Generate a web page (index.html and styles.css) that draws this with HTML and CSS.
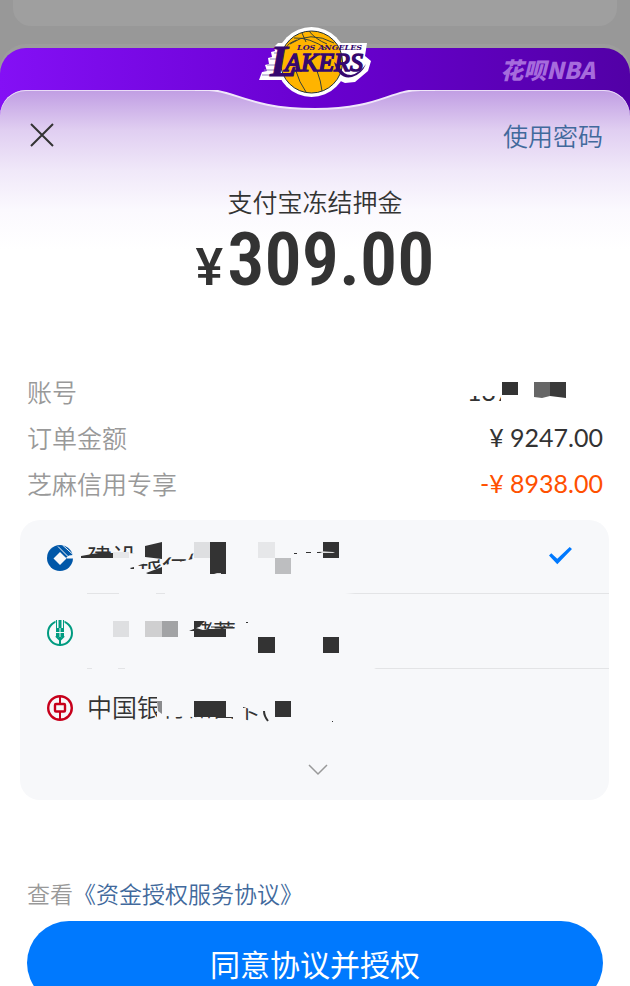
FILE: index.html
```html
<!DOCTYPE html>
<html lang="zh-CN">
<head>
<meta charset="utf-8">
<meta name="viewport" content="width=device-width, initial-scale=1">
<title>支付宝冻结押金</title>
<link rel="stylesheet" href="styles.css">
</head>
<body>
<div class="backdrop-card"></div>
<main class="sheet">
  <header class="banner">
    <svg class="logo" width="130" height="95" viewBox="0 0 130 95" role="img" aria-label="Los Angeles Lakers">
      <circle cx="61.500" cy="42" r="35" fill="#fff"/>
      <path d="M28 23H117L115 36L121 41L118 51L105 62L95 63L86 59L37 60H9L12 52L17 51L15 45L19 44L18 38L22 37L21 32L25 31L24 27Z" fill="#fff"/>
      <circle cx="61.500" cy="42" r="31" fill="#ffb400" stroke="#22303a" stroke-width="1"/>
      <g fill="none" stroke="#384236" stroke-width="1">
        <path d="M40 24Q60 10 84 23M44 18Q59 17 77 29M52 13L56 22M59 11Q65 19 77 24M46 51Q49 62 56 72M67 51Q71 61 72 71M36 28Q38 23 47 20"/>
      </g>
      <g font-family="Liberation Serif, serif" font-style="italic" fill="#35086f">
        <path d="M27 45H17M26 50H14M24 55H12M28 39H20M30 33H24" stroke="#9384bd" stroke-width="1"/>
        <text x="47" y="30" font-family="DejaVu Serif, serif" font-size="8" font-weight="700">LOS ANGELES</text>
        <text x="20" y="56" font-size="44" font-weight="700" stroke="#35086f" stroke-width="1">L</text>
        <text x="35" y="51" font-size="26" stroke="#35086f" stroke-width="1.500">AKERS</text>
      </g>
      <path d="M84 42Q89 60 102 57Q112 54 116 44Q110 53 101 55Q93 55 89 46Z" fill="#35086f"/>
    </svg>
    <span class="wordmark">花呗NBA</span>
  </header>
  <div class="panel">
    <svg class="dip" width="240" height="22" viewBox="0 0 240 22" aria-hidden="true">
      <defs><linearGradient id="dipFill"><stop offset="0" stop-color="#7307de"/><stop offset=".5" stop-color="#6900d0"/><stop offset="1" stop-color="#6200c1"/></linearGradient></defs>
      <path d="M0 0H14C38 0 56 19 120 19S194 0 226 0H240Z" fill="url(#dipFill)"/>
      <path d="M0 0H14C38 0 56 19 120 19S194 0 226 0H240" fill="none" stroke="#f0e6fa" stroke-width="2"/>
    </svg>
    <div class="toolbar">
      <button class="close" type="button" aria-label="关闭">
        <svg width="24" height="24" viewBox="0 0 24 24"><path d="M1 1L23 23M23 1L1 23" fill="none" stroke="#333" stroke-width="2"/></svg>
      </button>
      <a class="link" href="#">使用密码</a>
    </div>
    <h1 class="title">支付宝冻结押金</h1>
    <p class="amount"><span class="currency">¥</span>309.00</p>

    <dl class="details">
      <div class="detail">
        <dt>账号</dt>
        <dd>
          <svg class="fragment" width="134" height="46" viewBox="468 368 134 46" aria-hidden="true">
            <clipPath id="accountClip"><path d="M468 396H500V403H468Z"/></clipPath>
            <text x="466" y="401" font-family="Lato, sans-serif" font-size="25" fill="#333" clip-path="url(#accountClip)">137</text>
            <path d="M501 382H517V395H501Z" fill="#333"/>
            <path d="M533 382H549V396L541 398L533 397Z" fill="#666"/>
            <path d="M549 382H565V398L549 396Z" fill="#3a3a3a"/>
          </svg>
        </dd>
      </div>
      <div class="detail"><dt>订单金额</dt><dd>¥ 9247.00</dd></div>
      <div class="detail discount"><dt>芝麻信用专享</dt><dd>-¥ 8938.00</dd></div>
    </dl>

    <div class="banks" role="radiogroup">
      <label class="bank bank-first">
        <svg class="bank-icon" width="26" height="26" viewBox="0 0 26 26" aria-hidden="true">
          <circle cx="13" cy="13" r="13" fill="#0057a8"/>
          <path d="M13 7L19.500 13.500L13 20L6.500 13.500Z" fill="#f7f8fa"/>
          <path d="M17 11L20 13.500H26V10L22 10.500L19 13Z" fill="#f7f8fa"/>
          <path d="M11 1.500L21.500 12M15.500 0L26 9.500" stroke="#f7f8fa" stroke-width="1"/>
        </svg>
        <svg class="fragment" width="280" height="74" viewBox="80 520 280 74" aria-hidden="true">
          <clipPath id="clipA"><path d="M80 544H135V552L108 554L80 557Z"/></clipPath>
          <clipPath id="clipB"><path d="M136 565L160 558L202 551V556L165 564L160 568L140 568Z"/></clipPath>
          <g font-family="Noto Sans CJK SC, sans-serif" font-size="25" font-weight="400" fill="#333">
            <text x="87" y="566" clip-path="url(#clipA)">建设</text>
            <text x="137" y="571" clip-path="url(#clipB)">银行储</text>
          </g>
          <path d="M81 555L98 552H113V557H81ZM145 545L162 541V558L145 556ZM146 572L162 566V573H148ZM130 567L134 566V568L131 568ZM210 541H226V573H210ZM323 541H339V557H323ZM294 552H297V553H294ZM306 551H311V552H306ZM317 551H323V552H317Z" fill="#333"/>
          <path d="M113 551H129V557H113ZM258 541H275V557H258Z" fill="#e6e7e9"/>
          <path d="M194 541H210V557H194Z" fill="#dedfe1"/>
          <path d="M275 557H291V573H275Z" fill="#bdbec0"/>
          <path d="M318 550L333 551L335 552L322 552ZM214 573L217 572H221V573Z" fill="#ddd"/>
        </svg>
        <input class="pick" type="radio" name="bank" aria-label="建设银行" checked>
      </label>
      <label class="bank bank-second">
        <svg class="bank-icon" width="26" height="26" viewBox="0 0 26 26" fill="none" stroke="#009b80" aria-hidden="true">
          <circle cx="13" cy="13" r="12" stroke-width="2"/>
          <path d="M8.500 0H17.500V8H8.500Z" fill="#f7f8fa" stroke="none"/>
          <path d="M9.500 0V9M16.500 0V9" stroke-width="1"/>
          <path d="M13 0V8" stroke-width="3"/>
          <path d="M9 8H17V17H9Z" fill="#009b80" stroke="none"/>
          <path d="M9 16L13 20L17 16M13 16V26" stroke-width="2"/>
          <path d="M9 12.500H17M13 8V17" stroke="#f7f8fa" stroke-width="1"/>
        </svg>
        <svg class="fragment" width="280" height="74" viewBox="80 595 280 74" aria-hidden="true">
          <clipPath id="clipC"><path d="M194 620H236V628H194Z"/></clipPath>
          <path d="M113 620H129V636H113Z" fill="#dedfe1"/>
          <path d="M145 620H162V636H145Z" fill="#cfcfd0"/>
          <path d="M162 620H178V636H162Z" fill="#a2a3a5"/>
          <path d="M194 620H205L199 626L194 628ZM189 630L196 627L203 629L208 628H226V636H194V630ZM246 621H248V622H246ZM258 636H275V652H258ZM323 636H339V652H323Z" fill="#333"/>
          <text x="190" y="640" font-family="Noto Sans CJK SC, sans-serif" font-size="23" font-weight="400" fill="#333" clip-path="url(#clipC)">储蓄</text>
          <path d="M211 626H233" stroke="#333" stroke-width="1"/>
        </svg>
        <input class="pick" type="radio" name="bank" aria-label="农业银行">
      </label>
      <label class="bank">
        <svg class="bank-icon" width="26" height="26" viewBox="0 0 26 26" fill="none" stroke="#c7001b" aria-hidden="true">
          <circle cx="13" cy="13" r="11.800" stroke-width="2.400"/>
          <rect x="8" y="9" width="10" height="7.500" rx="1" stroke-width="2.400"/>
          <path d="M13 1V8M13 17V25" stroke-width="2"/>
        </svg>
        <svg class="fragment" width="280" height="74" viewBox="80 670 280 74" role="img" aria-label="中国银行">
          <clipPath id="clipD"><path d="M80 690H157V720H80Z"/></clipPath>
          <clipPath id="clipE"><path d="M163 715L194 716H233V718H163Z"/></clipPath>
          <clipPath id="clipF"><path d="M243 706L260 711V722H258L243 718Z"/></clipPath>
          <g font-family="Noto Sans CJK SC, sans-serif" font-size="25" fill="#333">
            <text x="87" y="716" font-weight="350" clip-path="url(#clipD)">中国银</text>
            <text x="162" y="715" clip-path="url(#clipE)">行储蓄</text>
            <text x="235" y="717" clip-path="url(#clipF)">卡</text>
          </g>
          <path d="M157 700L162 700V713L158 710Z" fill="#8a8b8d"/>
          <path d="M194 700H226V716H194ZM275 700H291V716H275ZM332 720H333V721H332Z" fill="#333"/>
          <path d="M264 710Q264 715 268 720" fill="none" stroke="#333" stroke-width="2"/>
        </svg>
        <input class="pick" type="radio" name="bank" aria-label="中国银行">
      </label>
      <button class="more" type="button" aria-label="更多">
        <svg width="20" height="12" viewBox="0 0 20 12"><path d="M1 1L10 10L19 1" fill="none" stroke="#999" stroke-width="1.500"/></svg>
      </button>
    </div>

    <p class="agreement">查看<a href="#">《资金授权服务协议》</a></p>
    <button class="submit" type="button">同意协议并授权</button>
  </div>
</main>
</body>
</html>
```
FILE: styles.css
```css
* {
  box-sizing: border-box;
}

body {
  margin: 0;
  height: 100vh;
  overflow: hidden;
  background: #989898;
  color: #333;
  font-family: "Noto Sans CJK SC", sans-serif;
  font-size: 25px;
  font-weight: 350;
}

.backdrop-card {
  height: 26px;
  margin: 0 13px 22px;
  background: #9f9f9f;
  border-radius: 0 0 18px 18px;
}

.sheet {
  min-height: calc(100vh - 48px);
  border-radius: 26px 26px 0 0;
  background: linear-gradient(to right, #8410f5, #6a00d2 50%, #5200a6);
  box-shadow: 0 -4px 0 #9d9d9d;
}

.banner {
  position: relative;
  display: flex;
  align-items: center;
  justify-content: flex-end;
  height: 42px;
  padding-right: 35px;
}

.logo {
  position: absolute;
  top: -28px;
  left: calc(50% - 65px);
  z-index: 1;
}

.wordmark {
  color: #a66bdc;
  font-size: 23px;
  font-style: italic;
  font-weight: 900;
  line-height: 42px;
}

.panel {
  position: relative;
  min-height: calc(100vh - 90px);
  padding: 27px 27px 0;
  border-radius: 26px 26px 0 0;
  background: linear-gradient(#c09de3, #e0cef1 40px, #f0e8f9 80px, #fbf9fe 120px, #fff 160px);
  box-shadow: inset 0 1px 0 #eadcf7;
}

.dip {
  position: absolute;
  top: 0;
  left: calc(50% - 120px);
}

.toolbar {
  display: flex;
  align-items: center;
  justify-content: space-between;
  height: 36px;
}

.close,
.more {
  display: flex;
  align-items: center;
  justify-content: center;
  padding: 0;
  border: 0;
  background: none;
}

.close {
  padding: 0 3px;
}

a {
  color: #41699c;
  text-decoration: none;
}

.title {
  margin: 30px 0 0;
  font-size: 25px;
  font-weight: 350;
  line-height: 36px;
  text-align: center;
}

.amount {
  display: flex;
  align-items: baseline;
  justify-content: center;
  gap: 4px;
  height: 64px;
  margin: 9px 0 76px;
  font-family: "Roboto Condensed", "Noto Sans CJK SC", sans-serif;
  font-size: 74px;
  font-weight: 600;
  line-height: 64px;
}

.currency {
  font-family: Roboto, "Noto Sans CJK SC", sans-serif;
  font-size: 52px;
  font-weight: 500;
}

.details {
  margin: 0 0 14px;
}

.detail {
  display: flex;
  justify-content: space-between;
  height: 46px;
  line-height: 46px;
}

.detail dt {
  color: #999;
}

.detail dd {
  margin: 0;
  font-family: Lato, "Noto Sans CJK SC", sans-serif;
  font-size: 25px;
  font-weight: 400;
}

.detail.discount dd {
  color: #ff5000;
}

.fragment {
  display: block;
}

.banks {
  margin: 0 -6px 0 -7px;
  border-radius: 20px;
  background: #f7f8fa;
}

.bank {
  display: flex;
  align-items: center;
  height: 75px;
  padding: 0 37px 0 27px;
  background-repeat: no-repeat;
  background-position: left bottom 1px;
  background-size: 100% 1px;
}

.bank-first {
  background-image: linear-gradient(to right, transparent 67px, #e3e4e6 67px 99px, transparent 99px 136px, #e3e4e6 136px 145px, transparent 145px 325px, #e3e4e6 335px);
}

.bank-second {
  background-image: linear-gradient(to right, transparent 67px, #e3e4e6 67px 72px, transparent 72px 98px, #e3e4e6 98px 105px, transparent 105px 354px, #e3e4e6 356px);
}

.bank-icon {
  flex: none;
  margin-right: 7px;
}

.pick {
  appearance: none;
  width: 23px;
  height: 18px;
  margin: 0 0 4px auto;
}

.pick:checked {
  background: #0079fe;
  clip-path: polygon(0 50%, 10% 38%, 36% 68%, 90% 3%, 100% 14%, 36% 98%);
}

.more {
  width: 100%;
  height: 55px;
  padding: 0 0 6px 6px;
}

.agreement {
  margin: 77px 0 12px;
  color: #999;
  font-size: 23px;
  line-height: 32px;
}

.submit {
  display: block;
  width: 100%;
  height: 84px;
  border: 0;
  border-radius: 42px;
  background: #0079fe;
  color: #fff;
  font-family: inherit;
  font-size: 30px;
  font-weight: 400;
}
```
